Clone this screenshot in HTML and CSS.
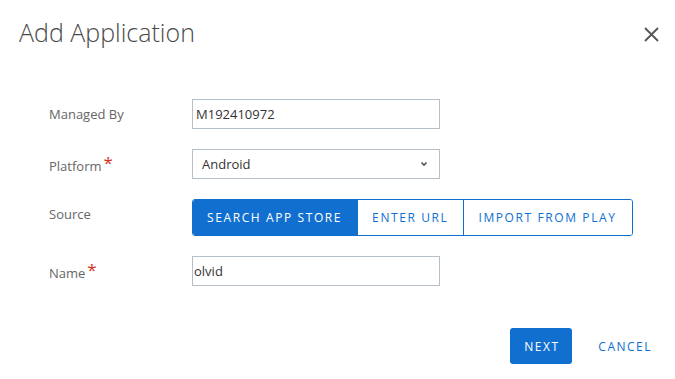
FILE: index.html
```html
<!DOCTYPE html>
<html lang="en">
<head>
  <meta charset="UTF-8"/>
  <title>Add Application</title>
  <link rel="stylesheet" href="styles.css">
</head>
<body>
  <div class="modal">
    <div class="modal-head">
      <h1 class="modal-title">Add Application</h1>
      <button class="close" aria-label="Close">
        <svg width="15" height="15" viewBox="0 0 15 15"><path d="M1 1L14 14M14 1L1 14" stroke="#555" stroke-width="1.8" fill="none"/></svg>
      </button>
    </div>

    <form class="form">
      <div class="row">
        <label class="label">Managed By</label>
        <input class="field" type="text" value="M192410972">
      </div>
      <div class="row">
        <label class="label">Platform<span class="req">*</span></label>
        <div class="field select">
          <span>Android</span>
          <svg width="8" height="6" viewBox="0 0 8 6"><path d="M1.5 1.5L4 4L6.5 1.5" stroke="#555" stroke-width="1.6" fill="none"/></svg>
        </div>
      </div>
      <div class="row row-top">
        <label class="label">Source</label>
        <div class="seg">
          <button type="button" class="seg-btn active">Search App Store</button>
          <button type="button" class="seg-btn">Enter URL</button>
          <button type="button" class="seg-btn">Import From Play</button>
        </div>
      </div>
      <div class="row">
        <label class="label">Name<span class="req">*</span></label>
        <input class="field name" type="text" value="olvid">
      </div>
    </form>

    <div class="modal-foot">
      <button class="btn primary">Next</button>
      <button class="btn link">Cancel</button>
    </div>
  </div>
</body>
</html>
```

FILE: styles.css
```css
* { margin:0; padding:0; box-sizing:border-box; }
html, body {
  width:100%; height:100%;
  background:#fff; color:#333;
  font-family:'Open Sans', sans-serif;
}
button { font-family:inherit; background:none; border:0; cursor:pointer; }

/* Шапка */
.modal-head {
  display:flex; align-items:flex-start; justify-content:space-between;
  padding:16px 14px 0 19px;
  height:64px;
}
.modal-title {
  font-size:25px; font-weight:300; color:#4a4a4a;
  line-height:32px;
}
.close { width:20px; height:20px; margin-top:8px; display:flex; align-items:center; justify-content:center; }

/* Форма */
.form {
  padding:35px 0 0 49px;
  display:flex; flex-direction:column; gap:20px;
}
.row { display:flex; align-items:center; }
.row-top .label { align-self:flex-start; padding-top:6px; }
.label {
  width:143px; flex:none;
  font-size:13px; color:#666;
}
.req { color:#d2301e; font-size:17px; margin-left:2px; position:relative; top:-2px; }
.field {
  width:248px; height:30px;
  border:1px solid #b5bfc9;
  font-family:inherit; font-size:13px; color:#333;
  padding:0 3px; outline:none;
}
.select {
  display:flex; align-items:center; justify-content:space-between;
  padding:0 11px 0 9px;
}
.name { padding:0 1px; }

/* Переключатель источника */
.seg {
  display:flex; height:37px;
  border:1px solid #1170cf; border-radius:3px; overflow:hidden;
}
.seg-btn {
  padding:0 15px 0 14px;
  font-size:12px; letter-spacing:1.6px; text-transform:uppercase;
  color:#1170cf; background:#fff;
  border-left:1px solid #1170cf;
}
.seg-btn:first-child { border-left:0; }
.seg-btn.active { background:#1170cf; color:#fff; }

/* Низ */
.modal-foot {
  display:flex; justify-content:flex-end; gap:12px;
  padding:42px 9px 0 0;
}
.btn {
  height:36px; padding:0 14px;
  font-size:12px; letter-spacing:1.5px; text-transform:uppercase;
  border-radius:3px;
}
.primary { background:#1170cf; color:#fff; width:62px; }
.link { color:#1170cf; }
```
